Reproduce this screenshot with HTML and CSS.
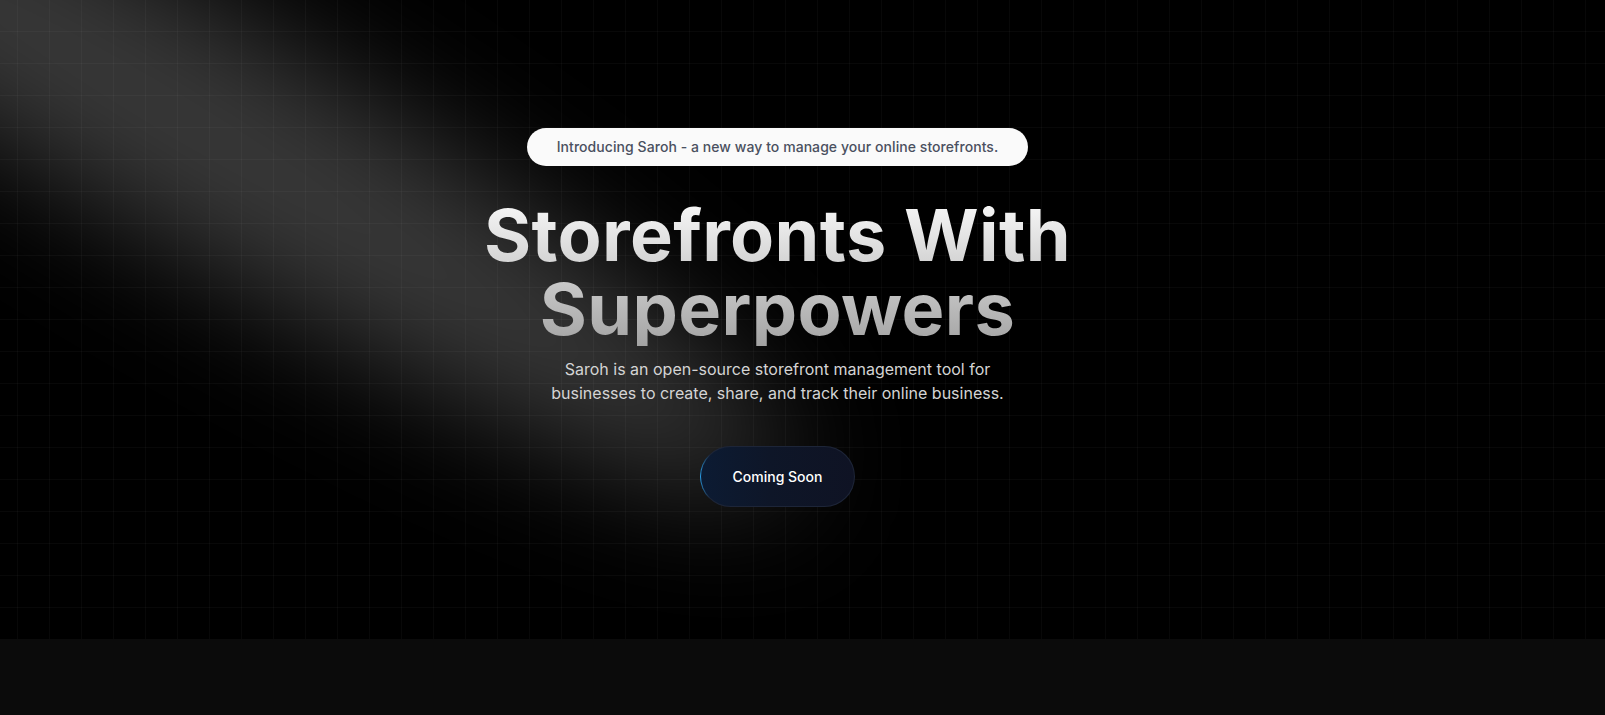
FILE: index.html
```html
<!DOCTYPE html>
<html lang="en">
<head>
<meta charset="utf-8">
<title>Saroh</title>
<link rel="stylesheet" href="styles.css">
</head>
<body>
<section class="hero">
  <svg class="spotlight" width="1605" height="639" viewBox="0 0 1605 639" aria-hidden="true">
    <defs>
      <filter id="blur" x="-50%" y="-50%" width="200%" height="200%">
        <feGaussianBlur stdDeviation="62"/>
      </filter>
    </defs>
    <g filter="url(#blur)">
      <ellipse cx="170" cy="112" rx="720" ry="115" transform="rotate(31 170 112)" fill="#ffffff" fill-opacity="0.22"/>
    </g>
  </svg>
  <div class="hero-content">
    <div class="pill">Introducing Saroh - a new way to manage your online storefronts.</div>
    <h1 class="title">Storefronts With<br>Superpowers</h1>
    <p class="lead">Saroh is an open-source storefront management tool for<br>businesses to create, share, and track their online business.</p>
    <button class="cta" type="button"><span class="cta-inner">Coming Soon</span></button>
  </div>
</section>
<section class="below"></section>
</body>
</html>
```

FILE: styles.css
```css
* { box-sizing: border-box; }

html, body {
  margin: 0;
  padding: 0;
}

body {
  background: #0b0b0b;
  font-family: Inter, "Noto Sans", "Liberation Sans", sans-serif;
  width: 1605px;
  height: 715px;
  overflow: hidden;
}

.hero {
  position: relative;
  height: 639px;
  overflow: hidden;
  background-color: #000;
  background-image:
    linear-gradient(to right, rgba(255,255,255,0.032) 1px, transparent 1px),
    linear-gradient(to bottom, rgba(255,255,255,0.032) 1px, transparent 1px);
  background-size: 32px 32px;
  background-position: 17px 31px;
}

.spotlight {
  position: absolute;
  left: 0;
  top: 0;
  pointer-events: none;
}

.hero-content {
  position: relative;
  display: flex;
  flex-direction: column;
  align-items: center;
  padding-top: 128px;
  padding-right: 50px;
}

.pill {
  height: 38px;
  padding: 9px 30px;
  border-radius: 999px;
  background: #fafafa;
  color: #4a5060;
  font-size: 14px;
  line-height: 20px;
  font-weight: 500;
  letter-spacing: 0.06px;
  white-space: nowrap;
}

.title {
  margin: 32px 0 0;
  font-size: 72px;
  line-height: 74px;
  font-weight: 700;
  letter-spacing: 0.35px;
  text-align: center;
  background: linear-gradient(to bottom, #fafafa, #a3a3a3);
  -webkit-background-clip: text;
  background-clip: text;
  color: transparent;
}

.lead {
  margin: 12px 0 0;
  font-size: 16px;
  line-height: 23.5px;
  color: #d4d4d4;
  text-align: center;
}

.cta {
  margin-top: 41px;
  padding: 1px;
  border: 0;
  border-radius: 999px;
  background:
    radial-gradient(ellipse 18px 26px at 0% 50%, #2aa3f0 0%, rgba(42,163,240,0.5) 50%, rgba(42,163,240,0) 100%),
    #1d2538;
  font-family: inherit;
  cursor: pointer;
}

.cta-inner {
  display: block;
  padding: 19.5px 32px;
  border-radius: 999px;
  background: linear-gradient(90deg, #0c1b33 0%, #0e1628 45%, #0f1324 100%);
  color: #ffffff;
  font-size: 14px;
  line-height: 20px;
  font-weight: 500;
  white-space: nowrap;
}

.below {
  height: 76px;
  background: #0b0b0b;
}
```
